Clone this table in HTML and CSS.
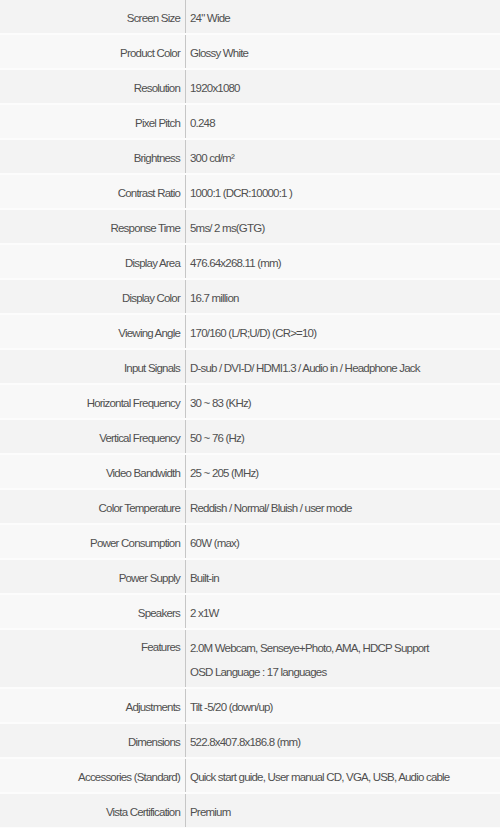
FILE: index.html
```html
<!DOCTYPE html>
<html>
<head>
<meta charset="utf-8">
<link rel="stylesheet" href="styles.css">
</head>
<body>
<div class="specs">
  <div class="row"><div class="label">Screen Size</div><div class="value">24" Wide</div></div>
  <div class="row"><div class="label">Product Color</div><div class="value">Glossy White</div></div>
  <div class="row"><div class="label">Resolution</div><div class="value">1920x1080</div></div>
  <div class="row"><div class="label">Pixel Pitch</div><div class="value">0.248</div></div>
  <div class="row"><div class="label">Brightness</div><div class="value">300 cd/m²</div></div>
  <div class="row"><div class="label">Contrast Ratio</div><div class="value">1000:1 (DCR:10000:1 )</div></div>
  <div class="row"><div class="label">Response Time</div><div class="value">5ms/ 2 ms(GTG)</div></div>
  <div class="row"><div class="label">Display Area</div><div class="value">476.64x268.11 (mm)</div></div>
  <div class="row"><div class="label">Display Color</div><div class="value">16.7 million</div></div>
  <div class="row"><div class="label">Viewing Angle</div><div class="value">170/160 (L/R;U/D) (CR&gt;=10)</div></div>
  <div class="row"><div class="label">Input Signals</div><div class="value">D-sub / DVI-D/ HDMI1.3 / Audio in / Headphone Jack</div></div>
  <div class="row"><div class="label">Horizontal Frequency</div><div class="value">30 ~ 83 (KHz)</div></div>
  <div class="row"><div class="label">Vertical Frequency</div><div class="value">50 ~ 76 (Hz)</div></div>
  <div class="row"><div class="label">Video Bandwidth</div><div class="value">25 ~ 205 (MHz)</div></div>
  <div class="row"><div class="label">Color Temperature</div><div class="value">Reddish / Normal/ Bluish / user mode</div></div>
  <div class="row"><div class="label">Power Consumption</div><div class="value">60W (max)</div></div>
  <div class="row"><div class="label">Power Supply</div><div class="value">Built-in</div></div>
  <div class="row"><div class="label">Speakers</div><div class="value">2 x1W</div></div>
  <div class="row multi"><div class="label">Features</div><div class="value"><p class="line">2.0M Webcam, Senseye+Photo, AMA, HDCP Support</p><p class="line">OSD Language : 17 languages</p></div></div>
  <div class="row"><div class="label">Adjustments</div><div class="value">Tilt -5/20 (down/up)</div></div>
  <div class="row"><div class="label">Dimensions</div><div class="value">522.8x407.8x186.8 (mm)</div></div>
  <div class="row"><div class="label">Accessories (Standard)</div><div class="value">Quick start guide, User manual CD, VGA, USB, Audio cable</div></div>
  <div class="row"><div class="label">Vista Certification</div><div class="value">Premium</div></div>
</div>
</body>
</html>
```

FILE: styles.css
```css
html, body {
  margin: 0;
  padding: 0;
  background: #ffffff;
}
body {
  font-family: "Liberation Sans", Arial, sans-serif;
  font-size: 11.5px;
  letter-spacing: -0.8px;
  color: #505050;
}
.specs {
  display: flex;
  flex-direction: column;
}
.row {
  display: grid;
  grid-template-columns: 186px 1fr;
  min-height: 33px;
  border-bottom: 2px solid #fcfcfc;
  background: #f3f3f3;
}
.row:nth-child(even) {
  background: #f8f8f8;
}
.label {
  display: flex;
  align-items: center;
  justify-content: flex-end;
  padding-top: 2px;
  padding-right: 5px;
  border-right: 1px solid #c6c6c6;
  white-space: nowrap;
}
.value {
  display: flex;
  align-items: center;
  padding-top: 2px;
  padding-left: 4px;
  white-space: nowrap;
}
.multi {
  min-height: 57px;
}
.multi .label {
  align-items: flex-start;
  padding-top: 11px;
}
.multi .value {
  flex-direction: column;
  align-items: flex-start;
  justify-content: center;
}
.line {
  margin: 0;
  line-height: 24px;
}
```
